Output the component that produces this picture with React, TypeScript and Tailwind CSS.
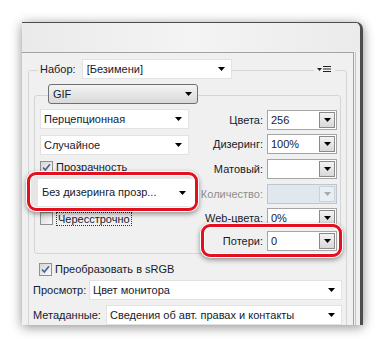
import React from 'react'

function Arrow({ color = '#000' }: { color?: string }) {
  return (
    <svg width="7" height="4" viewBox="0 0 7 4">
      <path d="M0 0h7L3.5 4z" fill={color} />
    </svg>
  )
}

function Combo({ value, className = '' }: { value: string; className?: string }) {
  return (
    <div className={`flex h-[20px] items-center justify-between border border-[#e2e2e2] bg-white pl-[3px] pr-[6px] ${className}`}>
      <span className="truncate">{value}</span>
      <Arrow />
    </div>
  )
}

function Field({ value = '', disabled = false }: { value?: string; disabled?: boolean }) {
  return (
    <div className={`flex h-[20px] w-[70px] border ${disabled ? 'border-[#bcc7d2] bg-[#e1e7ee]' : 'border-[#a5a5a5] bg-white'}`}>
      <span className="flex-1 pl-[3px] leading-[18px]">{value}</span>
      <div
        className={`m-[1px] flex w-[16px] items-center justify-center border ${
          disabled ? 'border-[#c9d1d9] bg-[#e9eef3]' : 'border-[#8a8a8a] bg-gradient-to-b from-[#f3f3f3] to-[#d8d8d8]'
        }`}
      >
        <Arrow color={disabled ? '#a9a9a9' : '#000'} />
      </div>
    </div>
  )
}

function Check({ checked = false }: { checked?: boolean }) {
  return (
    <div className="flex h-[13px] w-[13px] shrink-0 items-center justify-center border border-[#8e8f8f] bg-gradient-to-br from-[#d6d6d6] to-[#fafafa]">
      {checked && (
        <svg width="9" height="9" viewBox="0 0 9 9">
          <path d="M1 4.5l2.3 2.6L8 1.2" fill="none" stroke="#4a5f96" strokeWidth="1.6" />
        </svg>
      )}
    </div>
  )
}

function Row({ label, children, disabled = false }: { label: string; children: React.ReactNode; disabled?: boolean }) {
  return (
    <div className="flex items-center gap-[4px]">
      <span className={disabled ? 'text-[#8d8d8d]' : ''}>{label}</span>
      {children}
    </div>
  )
}

export default function App() {
  return (
    <div className="relative h-[347px] w-[386px] overflow-hidden bg-white pl-[22px] pt-[22px] font-['Liberation_Sans',Arial,sans-serif] text-[11px] text-[#161a2e]">
      <div className="flex h-[303px] w-[341px] flex-col overflow-hidden rounded-tr-[7px] border-t border-r-[3px] border-t-[#4d4d4d] border-r-[#4d4d4d] bg-[#f0f0f0] shadow-[0_2px_12px_rgba(0,0,0,0.45)]">
        <div className="h-[29px] shrink-0 bg-gradient-to-r from-[#eaeaea] via-[#f4f4f4] to-[#ebebeb]" />
        <div className="flex flex-1 overflow-hidden">
          <div className="w-[332px] overflow-hidden border-t border-r border-[#a3a3a3]">
            {/* Набор */}
            <div className="ml-[6px] mt-[17px] h-[300px] w-[319px] rounded-[3px] border border-[#d5d5d5]">
              <div className="-mt-[12px] flex h-[20px] items-center">
                <div className="ml-[9px] bg-[#f0f0f0] pl-[2px] pr-[6px]">Набор:</div>
                <Combo value="[Безимени]" className="w-[150px] pl-[4px]" />
                <div className="flex-1" />
                <div className="bg-[#f0f0f0] px-[3px]">
                  <svg width="15" height="8" viewBox="0 0 15 8">
                    <path d="M0 3h5L2.5 6z" fill="#222" />
                    <path d="M6 1.5h8M6 4h8M6 6.5h8" stroke="#222" strokeWidth="1.2" />
                  </svg>
                </div>
                <div className="w-[11px]" />
              </div>

              {/* GIF */}
              <div className="ml-[5px] mt-[16px] h-[159px] w-[307px] rounded-[3px] border border-[#d5d5d5]">
                <div className="-mt-[12px] ml-[13px] flex h-[20px] w-[150px] items-center justify-between rounded-[3px] border border-[#707070] bg-gradient-to-b from-[#f4f4f4] to-[#d9d9d9] pl-[4px] pr-[5px]">
                  <span>GIF</span>
                  <Arrow />
                </div>
                <div className="mt-[5px] flex justify-between pl-[5px] pr-[3px]">
                  <div className="flex w-[149px] flex-col">
                    <Combo value="Перцепционная" />
                    <Combo value="Случайное" className="mt-[6px]" />
                    <div className="mt-[6px] flex h-[13px] items-center gap-[3px]">
                      <Check checked />
                      <span>Прозрачность</span>
                    </div>
                    <div className="h-[38px]" />
                    <div className="flex h-[13px] items-center gap-[3px]">
                      <Check />
                      <span className="border border-dotted border-[#333] px-[1px] leading-[12px]">Чересстрочно</span>
                    </div>
                  </div>
                  <div className="mt-[1px] flex flex-col items-end">
                    <Row label="Цвета:"><Field value="256" /></Row>
                    <div className="mt-[4px]"><Row label="Дизеринг:"><Field value="100%" /></Row></div>
                    <div className="mt-[5px]"><Row label="Матовый:"><Field /></Row></div>
                    <div className="mt-[5px]"><Row label="Количество:" disabled><Field disabled /></Row></div>
                    <div className="mt-[4px]"><Row label="Web-цвета:"><Field value="0%" /></Row></div>
                    <div className="mt-[3px]"><Row label="Потери:"><Field value="0" /></Row></div>
                  </div>
                </div>
              </div>

              <div className="ml-[10px] mt-[9px] flex h-[13px] items-center gap-[3px]">
                <Check checked />
                <span>Преобразовать в sRGB</span>
              </div>
              <div className="mt-[4px] flex items-center pl-[4px] pr-[4px]">
                <span className="w-[56px]">Просмотр:</span>
                <Combo value="Цвет монитора" className="flex-1" />
              </div>
              <div className="mt-[5px] flex items-center pl-[4px] pr-[4px]">
                <span className="w-[73px]">Метаданные:</span>
                <Combo value="Сведения об авт. правах и контакты" className="flex-1" />
              </div>
            </div>
          </div>
          <div className="ml-[1px] w-[1px] bg-[#c4c4c4]" />
        </div>
      </div>

      {/* callouts */}
      <div className="absolute left-[27px] top-[172px] h-[39px] w-[171px] overflow-hidden rounded-[9px] border-[3px] border-[#e5101d] bg-[#e6e6e6] pl-[8px] pt-[4px] shadow-[0_0_0_1px_#fff,inset_0_0_0_1px_#fff,0_2px_5px_1px_rgba(0,0,0,0.4)]">
        <div className="flex h-[27px] items-center justify-between bg-white pl-[4px] pr-[9px] text-[11px]">
          <span>Без дизеринга прозр...</span>
          <Arrow />
        </div>
      </div>
      <div className="absolute left-[201px] top-[224px] h-[33px] w-[141px] rounded-[9px] border-[3px] border-[#e5101d] shadow-[0_0_0_1px_#fff,inset_0_0_0_1px_#fff,0_2px_5px_1px_rgba(0,0,0,0.4)]" />
    </div>
  )
}
